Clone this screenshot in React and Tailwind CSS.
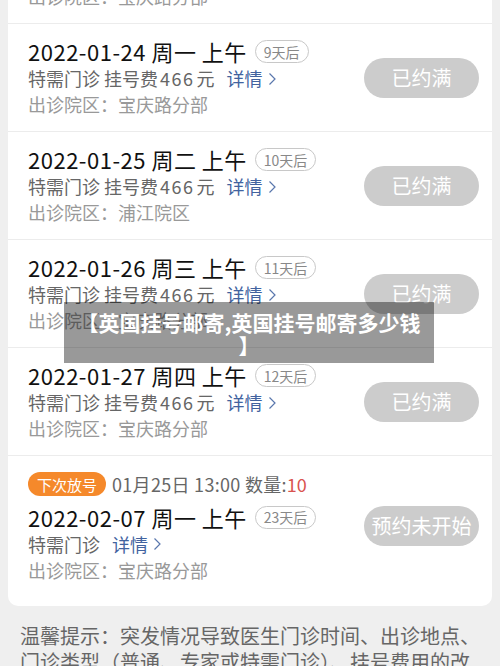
import React from "react";

const rows = [
  { date: "2022-01-21 周五 上午", days: "6天后", place: "宝庆路分部" },
  { date: "2022-01-24 周一 上午", days: "9天后", place: "宝庆路分部" },
  { date: "2022-01-25 周二 上午", days: "10天后", place: "浦江院区" },
  { date: "2022-01-26 周三 上午", days: "11天后", place: "宝庆路分部" },
  { date: "2022-01-27 周四 上午", days: "12天后", place: "宝庆路分部" },
];

const Chevron = () => (
  <svg width="9" height="14" viewBox="0 0 9 14" className="ml-[5px] inline-block">
    <polyline points="1.5,1.5 7,7 1.5,12.5" fill="none" stroke="#5a77ad" strokeWidth="1.2" />
  </svg>
);

const DayTag = ({ text }) => (
  <span className="ml-2 inline-flex h-[23px] items-center rounded-full border border-[#c8c8c8] px-2 text-[14px] leading-none tracking-normal text-[#888]">
    {text}
  </span>
);

const StatusButton = ({ text }) => (
  <div className="flex h-[40px] w-[115px] shrink-0 items-center justify-center rounded-full bg-[#cccccc] text-[20px] text-white">
    {text}
  </div>
);

const Detail = () => (
  <>
    <span className="ml-3 text-[#42639f]">详情</span>
    <Chevron />
  </>
);

const Row = ({ row }) => (
  <div className="flex h-[108px] items-center border-b border-[#ececec] pl-5 pr-[13px]">
    <div className="flex-1">
      <div className="flex h-[28px] items-center text-[22px] tracking-[0.5px] text-[#111]">
        <span>{row.date}</span>
        <DayTag text={row.days} />
      </div>
      <div className="flex h-[26px] items-center text-[18px] text-[#666]">
        <span>特需门诊 挂号费</span>
        <span className="mx-[2px] tracking-[1.5px]">466</span>
        <span>元</span>
        <Detail />
      </div>
      <div className="flex h-[26px] items-center text-[18px] text-[#999]">
        出诊院区：{row.place}
      </div>
    </div>
    <StatusButton text="已约满" />
  </div>
);

export default function App() {
  return (
    <div
      className="relative h-[666px] overflow-hidden bg-[#efefef]"
      style={{ fontFamily: '"Noto Sans CJK SC", "Noto Sans", sans-serif' }}
    >
      <div className="pt-px">
        <div className="mx-2 -mt-[85px] overflow-hidden rounded-[10px] bg-white">
          {rows.map((r) => (
            <Row key={r.date} row={r} />
          ))}
          <div className="flex h-[150px] pl-5 pr-[13px]">
            <div className="flex-1 pt-[14px]">
              <div className="flex h-[28px] items-center text-[18px] text-[#666]">
                <span className="mr-[6px] inline-flex h-[24px] items-center rounded-full bg-[#f5892b] px-[9px] text-[15px] leading-none text-white">
                  下次放号
                </span>
                <span className="tracking-[0.3px]">01月25日 13:00 数量:</span>
                <span className="text-[#d9534f]">10</span>
              </div>
              <div className="mt-[5px] flex h-[28px] items-center text-[22px] tracking-[0.5px] text-[#111]">
                <span>2022-02-07 周一 上午</span>
                <DayTag text="23天后" />
              </div>
              <div className="flex h-[26px] items-center text-[18px] text-[#666]">
                <span>特需门诊</span>
                <Detail />
              </div>
              <div className="flex h-[26px] items-center text-[18px] text-[#999]">
                出诊院区：宝庆路分部
              </div>
            </div>
            <div className="pt-[50px]">
              <StatusButton text="预约未开始" />
            </div>
          </div>
        </div>
      </div>

      <p className="mt-[17px] pl-5 pr-4 text-[20px] leading-[26px] text-[#666]">
        温馨提示：突发情况导致医生门诊时间、出诊地点、
        <br />
        门诊类型（普通、专家或特需门诊）、挂号费用的改变，请以医院实际安排为准。
      </p>

      <div className="absolute left-[64px] top-[302px] w-[370px] bg-black/40 px-3 pb-[6px] pt-[9px] text-center text-[21px] font-bold leading-[23px] text-white">
        【英国挂号邮寄,英国挂号邮寄多少钱
        <br />】
      </div>
    </div>
  );
}
